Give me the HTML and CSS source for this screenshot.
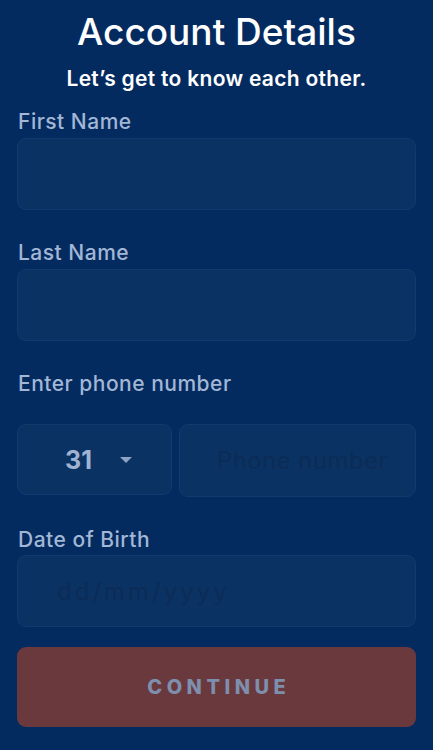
FILE: index.html
```html
<!DOCTYPE html>
<html lang="en">
<head>
<meta charset="utf-8">
<title>Account Details</title>
<link rel="stylesheet" href="styles.css">
</head>
<body>
<main class="page">
  <header class="head">
    <h1 class="title">Account Details</h1>
    <p class="subtitle">Let’s get to know each other.</p>
  </header>
  <form class="form">
    <div class="field">
      <label class="label">First Name</label>
      <div class="box"></div>
    </div>
    <div class="field">
      <label class="label">Last Name</label>
      <div class="box"></div>
    </div>
    <div class="field">
      <label class="label">Enter phone number</label>
      <div class="phone-row">
        <div class="box country">
          <span class="code">31</span>
          <svg class="caret" width="12" height="7" viewBox="0 0 12 7"><path d="M0 0 L12 0 L6 6 Z" fill="#8ea3c4"/></svg>
        </div>
        <div class="box phone"><span class="ph">Phone number</span></div>
      </div>
    </div>
    <div class="field dob-field">
      <label class="label">Date of Birth</label>
      <div class="box dob"><span class="ph ph-date">dd/mm/yyyy</span></div>
    </div>
    <button type="button" class="btn">CONTINUE</button>
  </form>
</main>
</body>
</html>
```

FILE: styles.css
```css
html, body {
  margin: 0;
  padding: 0;
  background: #042b5f;
}
body {
  font-family: Inter, "Noto Sans", sans-serif;
  width: 433px;
  height: 750px;
  overflow: hidden;
}
.page {
  padding: 0 17px;
}
.head {
  text-align: center;
  color: #ffffff;
}
.title {
  margin: 0;
  padding-top: 10px;
  font-size: 37px;
  line-height: 44px;
  font-weight: 500;
}
.subtitle {
  margin: 12px 0 0;
  font-size: 21px;
  line-height: 26px;
  font-weight: 600;
  letter-spacing: 0.3px;
}
.form {
  margin-top: 18px;
  display: flex;
  flex-direction: column;
}
.field {
  display: flex;
  flex-direction: column;
  margin-bottom: 31px;
}
.label {
  color: #a2b7d6;
  font-size: 21px;
  line-height: 24px;
  font-weight: 500;
  letter-spacing: 0.5px;
  margin-bottom: 4px;
  margin-left: 1px;
}
.box {
  height: 72px;
  box-sizing: border-box;
  background: #0a3263;
  border: 1px solid #113b6e;
  border-radius: 9px;
  display: flex;
  align-items: center;
}
.phone-row {
  margin-top: 24px;
  display: flex;
  gap: 7px;
}
.country {
  width: 155px;
  flex: none;
  justify-content: center;
  gap: 28px;
  height: 71px;
}
.code {
  color: #9fb4d3;
  font-size: 25px;
  font-weight: 700;
  margin-left: 8px;
}
.caret {
  margin-top: 2px;
}
.phone {
  flex: 1;
  padding-left: 37px;
  height: 73px;
}
.ph {
  color: #0c2c57;
  font-size: 24px;
  font-weight: 400;
  letter-spacing: 0.4px;
}
.ph-date {
  letter-spacing: 3px;
}
.dob-field {
  margin-bottom: 20px;
}
.dob-field .label {
  margin-bottom: 3px;
}
.dob {
  padding-left: 39px;
}
.btn {
  height: 80px;
  border: none;
  border-radius: 9px;
  background: #6a393d;
  color: #7e8fae;
  font-family: Inter, "Noto Sans", sans-serif;
  font-size: 20px;
  font-weight: 800;
  letter-spacing: 4.5px;
  padding: 0 0 0 4.5px;
}
```
